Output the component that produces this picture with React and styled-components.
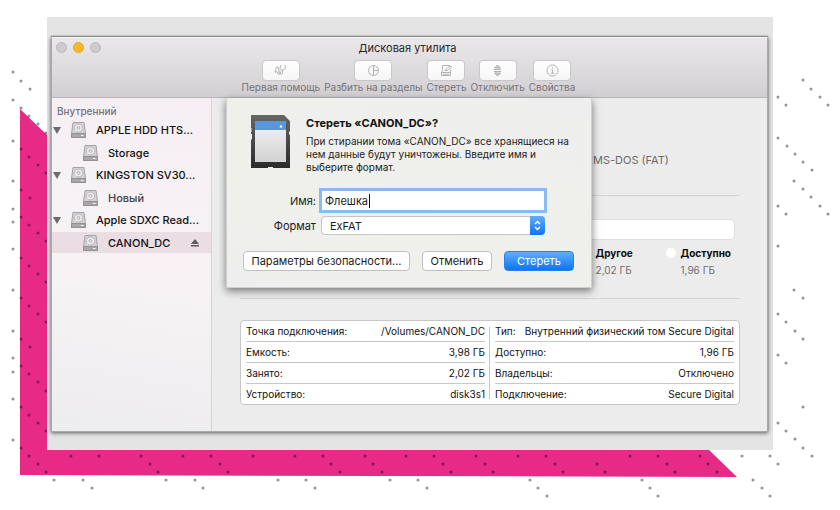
import React from "react";
import styled, { createGlobalStyle } from "styled-components";

const GlobalStyle = createGlobalStyle`
  * { box-sizing: border-box; }
  body { margin: 0; background: #fff; font-family: Inter, "Noto Sans", sans-serif; color: #1c1c1c; }
  button, input, select { font: inherit; color: inherit; margin: 0; }
`;

const Page = styled.div`
  position: relative;
  min-height: 100vh;
  padding: 17px 67px 60px 47px;
  overflow: hidden;
`;

const Artwork = styled.svg`
  position: absolute;
  inset: 0;
`;

const Backdrop = styled.div`
  position: relative;
  padding: 20px 5px 18px 4px;
  background: #e4e4e4;
`;

const Window = styled.div`
  position: relative;
  display: flex;
  flex-direction: column;
  background: #ececec;
  border: 1px solid #a9a9a9;
  border-top-color: #f4f4f4;
  box-shadow: 0 -1px 1px #8b8b8b, 0 1px 4px rgba(0, 0, 0, 0.6);
`;

const Toolbar = styled.header`
  display: flex;
  flex-direction: column;
  align-items: center;
  position: relative;
  height: 60px;
  background: linear-gradient(#eae8eb, #d2cfd3);
  border-bottom: 1px solid #b6b4b7;
`;

const TrafficLights = styled.div`
  position: absolute;
  top: 4px;
  left: 4px;
  display: flex;
  gap: 6px;
`;

const Light = styled.button`
  width: 11px;
  height: 11px;
  padding: 0;
  border-radius: 50%;
  border: 1px solid ${(p) => (p.$active ? "#e2a02a" : "#b9b8ba")};
  background: ${(p) => (p.$active ? "#fdb924" : "#cdcbce")};
`;

const Title = styled.h1`
  margin: 0;
  padding: 2px 4px 0 0;
  font-size: 11px;
  line-height: 16px;
  font-weight: 400;
  color: #262626;
`;

const Tools = styled.nav`
  display: flex;
  gap: 4px;
  padding: 4px 2px 0 0;
`;

const Tool = styled.button`
  display: flex;
  flex-direction: column;
  align-items: center;
  padding: 0;
  border: 0;
  background: none;
  font-size: 10px;
  line-height: 13px;
  color: #757376;
`;

const ToolFace = styled.span`
  display: grid;
  place-items: center;
  width: 38px;
  height: 21px;
  border: 1px solid #c9c7ca;
  border-radius: 4px;
  background: linear-gradient(#fff, #f6f6f6);
`;

const Body = styled.div`
  display: flex;
`;

const Sidebar = styled.aside`
  flex: 0 0 160px;
  border-right: 1px solid #d6d4d6;
  background: linear-gradient(190deg, #f5eff5, #f7f3f4 55%, #edecf0);
`;

const SidebarTitle = styled.h2`
  height: 20px;
  margin: 0;
  padding: 6px 5px 0;
  font-size: 10px;
  line-height: 14px;
  font-weight: 500;
  color: #757277;
`;

const Tree = styled.ul`
  margin: 0;
  padding: 0;
  list-style: none;
`;

const Device = styled.li`
  display: flex;
  align-items: center;
  gap: 10px;
  height: ${(p) => (p.$nested ? 21 : 24)}px;
  padding: 0 12px 0 ${(p) => (p.$nested ? 31 : 1)}px;
  background: ${(p) => (p.$selected ? "#eadde3" : "transparent")};
  font-size: 11px;
  line-height: 16px;
  font-weight: 500;
  white-space: nowrap;
  color: ${(p) => (p.$dim ? "#454346" : "#111")};
`;

const Push = styled.span`
  display: flex;
  margin-left: auto;
`;

const Content = styled.main`
  flex: 1;
  min-width: 0;
  padding: 0 27px 26px 28px;
`;

const VolumeHeader = styled.div`
  height: 98px;
  padding: 54px 0 0 353px;
  border-bottom: 1px solid #d3d3d3;
  font-size: 11px;
  line-height: 16px;
  color: #6a6a6a;
`;

const Usage = styled.section`
  height: 103px;
  padding: 23px 5px 0;
  border-bottom: 1px solid #d3d3d3;
`;

const UsageBar = styled.div`
  height: 21px;
  border: 1px solid #dedede;
  border-radius: 5px;
  background: #fff;
`;

const Legend = styled.div`
  display: flex;
  justify-content: flex-end;
  gap: 18px;
  padding: 5px 4px 0 0;
`;

const LegendItem = styled.div`
  display: flex;
  gap: 5px;
  min-width: 52px;
  font-size: 10px;
  line-height: 17px;
  color: #6c6c6c;
`;

const LegendDot = styled.span`
  width: 10px;
  height: 10px;
  margin-top: 3px;
  border-radius: 50%;
  background: #fff;
`;

const LegendName = styled.strong`
  display: block;
  color: #0d0d0d;
`;

const InfoBox = styled.section`
  display: grid;
  grid-template-columns: repeat(2, minmax(0, 1fr));
  margin-top: 21px;
  border: 1px solid #c6c6c6;
  border-radius: 4px;
  background: #fff;
`;

const InfoColumn = styled.div`
  position: relative;
  padding: 0 5px;
  & + &::before {
    content: "";
    position: absolute;
    left: -1px;
    top: 6px;
    bottom: 5px;
    width: 1px;
    background: #c6c6c6;
  }
`;

const InfoTable = styled.table`
  display: block;
  font-size: 10px;
  line-height: 20px;
  color: #111;
  white-space: nowrap;
  tbody { display: block; }
  tr { display: flex; justify-content: space-between; }
  tr + tr { border-top: 1px solid #c8c8c8; }
  th, td { padding: 0; font-weight: 400; }
`;

const Dialog = styled.form`
  position: absolute;
  top: 60px;
  left: 174px;
  width: 366px;
  padding: 17px 17px 16px 16px;
  border: 1px solid #cfcfcf;
  border-top: 0;
  background: linear-gradient(15deg, #eeeeee, #f0f0eb 40%, #eeeeee);
  box-shadow: 0 3px 8px rgba(0, 0, 0, 0.5);
`;

const Intro = styled.div`
  display: flex;
  gap: 15px;
  padding-left: 7px;
`;

const DialogTitle = styled.h2`
  margin: 0 0 4px;
  font-size: 11px;
  line-height: 16px;
  font-weight: 700;
  color: #111;
`;

const Message = styled.p`
  margin: 0;
  font-size: 10px;
  line-height: 13px;
  white-space: nowrap;
`;

const Fields = styled.div`
  display: grid;
  grid-template-columns: 73px 224px;
  column-gap: 5px;
  row-gap: 5px;
  align-items: center;
  margin-top: 16px;
  font-size: 11px;
  line-height: 16px;
`;

const FieldLabel = styled.label`
  text-align: right;
`;

const Control = styled.div`
  position: relative;
  display: flex;
`;

const NameInput = styled.input`
  width: 100%;
  height: 21px;
  padding: 1px 3px 0;
  border: 1px solid #8fb9e8;
  border-radius: 0;
  background: #fff;
  outline: none;
  box-shadow: 0 0 0 2px #86bcf2;
  caret-color: transparent;
`;

const Caret = styled.span`
  position: absolute;
  left: 48px;
  top: 4px;
  width: 1px;
  height: 14px;
  background: #111;
`;

const FormatSelect = styled.select`
  appearance: none;
  width: 100%;
  height: 19px;
  padding: 0 24px 0 8px;
  border: 1px solid #c4c4c4;
  border-radius: 4px;
  background: #fff;
`;

const Stepper = styled.span`
  position: absolute;
  top: 0;
  right: 0;
  display: grid;
  place-items: center;
  width: 15px;
  height: 19px;
  border-radius: 0 4px 4px 0;
  background: linear-gradient(#5eaef9, #1273f3);
  pointer-events: none;
`;

const Actions = styled.div`
  display: grid;
  grid-template-columns: 167px 70px 70px;
  justify-content: space-between;
  margin-top: 16px;
`;

const Button = styled.button`
  height: 20px;
  padding: 0;
  border: 1px solid ${(p) => (p.$primary ? "#2b80e8" : "#c0c0c0")};
  border-radius: 4px;
  background: ${(p) => (p.$primary ? "linear-gradient(#5eb0fb, #0d74f5)" : "#fff")};
  color: ${(p) => (p.$primary ? "#fff" : "#1c1c1c")};
  font-size: 11px;
  line-height: 16px;
  white-space: nowrap;
`;

const dots = [
  [13, 72], [21, 81], [30, 89], [13, 100], [21, 108], [29, 116], [38, 124], [46, 133], [13, 141], [21, 149], [29, 157], [38, 165], [46, 173],
  [13, 181], [21, 190], [30, 198], [13, 209], [21, 217], [29, 225], [38, 233], [46, 241], [13, 222], [13, 249], [21, 258], [29, 266], [38, 274],
  [46, 282], [13, 290], [21, 298], [29, 306], [38, 314], [46, 322], [13, 331], [21, 339], [30, 347], [13, 358], [13, 372], [21, 366], [29, 374],
  [38, 382], [46, 391], [13, 399], [21, 407], [29, 415], [38, 423], [46, 431], [13, 440], [21, 448], [29, 456], [38, 464], [46, 472],
  [71, 456], [99, 456], [141, 456], [183, 456], [211, 456], [253, 456], [150, 464], [220, 464], [158, 472], [228, 472],
  [54, 480], [83, 480], [92, 488], [166, 480], [195, 480], [203, 488],
  [295, 456], [323, 456], [365, 456], [406, 456], [434, 456], [476, 456], [518, 456], [546, 456], [630, 456], [658, 456], [700, 456], [742, 456], [770, 456],
  [331, 464], [373, 464], [443, 464], [485, 464], [555, 464], [597, 464], [667, 464], [708, 464], [778, 464],
  [340, 472], [382, 472], [451, 472], [493, 472], [563, 472], [605, 472], [675, 472], [717, 472],
  [278, 480], [306, 480], [390, 480], [418, 480], [530, 480], [642, 480], [753, 480],
  [315, 488], [427, 488], [538, 488], [650, 488], [762, 488], [547, 496], [658, 496], [770, 496],
  [803, 80], [811, 89], [820, 97], [828, 105], [778, 97], [786, 105], [778, 138], [787, 146], [795, 154], [803, 162], [812, 170],
  [794, 181], [803, 189], [811, 197], [820, 206], [828, 214], [778, 206], [786, 214], [778, 246], [794, 290], [803, 298],
  [778, 314], [786, 322], [795, 331], [803, 339], [778, 355], [786, 363], [803, 407], [778, 423], [786, 431], [795, 439], [803, 448], [812, 456],
];

function Disk() {
  return (
    <svg width="15" height="16" viewBox="0 0 15 16" aria-hidden="true">
      <path d="M2 .5h11l1.500 11v4H.5v-4z" fill="#d4d2d4" stroke="#a5a3a6" />
      <path d="M.5 11.500h14v4H.5z" fill="#a9a7aa" stroke="#929093" />
      <ellipse cx="7.500" cy="6" rx="4.400" ry="4" fill="#e9e7e9" stroke="#b9b7ba" />
      <circle cx="7.500" cy="6" r="1.400" fill="none" stroke="#a6a4a7" strokeWidth=".8" />
      <path d="M4 9.500l3-3M10 13.500h2.500" stroke="#f5f5f5" />
    </svg>
  );
}

function SdCard() {
  return (
    <svg width="41" height="54" viewBox="0 0 41 54" aria-hidden="true">
      <defs>
        <linearGradient id="shell" x2="0" y2="1"><stop stopColor="#666" /><stop offset="1" stopColor="#2b2b2b" /></linearGradient>
        <linearGradient id="label" x2="0" y2="1"><stop stopColor="#f4f4f4" /><stop offset="1" stopColor="#d2d2d2" /></linearGradient>
      </defs>
      <path d="M1 0h33l6 6v10l-1 1v2l1 1v33H23v-1h-5v1H1V25l1-1v-5H1z" fill="url(#shell)" />
      <path d="M1 13h1v4H1z" fill="#d9a51c" />
      <path d="M5 6h31v41H5z" fill="url(#label)" />
      <path d="M5 6h31v9H5z" fill="#5b95dc" />
      <path d="M29.500 12.500l1.500-3 1.500 3z" fill="#fff" />
    </svg>
  );
}

const toolDrawings = {
  aid: (
    <>
      <path d="M3.500 2.500c-2 2-2 4-2.500 5.500h2.500l.5 2c.8 1 2 .3 1.700-.7L4.800 6 3.500 2.500z" />
      <path d="M6.500 1.500 6 4.500c0 2 4 2 5 0l.5-2.500M8.500 6v2.500c0 2.500-2 2.500-2 .5V7.500M11.500 2l-1-1M6.500 1.500h1" />
    </>
  ),
  partition: <><circle cx="6.500" cy="6.500" r="5" /><path d="M6.500 1.500v10M6.500 6.500h5" /></>,
  erase: <><path d="M10 1.500H2.500v5L1.500 8.500h9V6M5 6.500l1.500-2L10.500 2l1 1L8 6.500z" /><path d="M1.500 8.500v3h9v-3M3 10.200h6" /></>,
  unmount: <><path d="M6.500 1 3.500 4h6zM6.500 12l-3-3h6z" fill="#c8c6c9" /><path d="M3 5.500h7M3 7.500h7" /></>,
  info: <><circle cx="6.500" cy="6.500" r="5.500" /><path d="M5.300 5.800h1.400v3.400M5 9.400h3.200M6.500 3.200v1.200" /></>,
};

const tools = [
  ["aid", "Первая помощь"],
  ["partition", "Разбить на разделы"],
  ["erase", "Стереть"],
  ["unmount", "Отключить"],
  ["info", "Свойства"],
];

const devices = [
  { name: "APPLE HDD HTS..." },
  { name: "Storage", nested: true },
  { name: "KINGSTON SV30..." },
  { name: "Новый", nested: true, dim: true },
  { name: "Apple SDXC Read..." },
  { name: "CANON_DC", nested: true, selected: true },
];

const infoColumns = [
  [["Точка подключения:", "/Volumes/CANON_DC"], ["Емкость:", "3,98 ГБ"], ["Занято:", "2,02 ГБ"], ["Устройство:", "disk3s1"]],
  [["Тип:", "Внутренний физический том Secure Digital"], ["Доступно:", "1,96 ГБ"], ["Владельцы:", "Отключено"], ["Подключение:", "Secure Digital"]],
];

export default function App() {
  return (
    <Page>
      <GlobalStyle />
      <Artwork width="840" height="510" viewBox="0 0 840 510" aria-hidden="true">
        <path d="M20 109 47 135V450H709L737 477 20 475z" fill="#e62a85" />
        {dots.map(([x, y]) => (
          <circle key={`${x}-${y}`} cx={x} cy={y} r="1.5" fill="#000" opacity=".42" />
        ))}
      </Artwork>
      <Backdrop>
        <Window>
          <Toolbar>
            <TrafficLights>
              <Light type="button" aria-label="Закрыть" />
              <Light type="button" aria-label="Свернуть" $active />
              <Light type="button" aria-label="Развернуть" />
            </TrafficLights>
            <Title>Дисковая утилита</Title>
            <Tools>
              {tools.map(([id, label]) => (
                <Tool key={id} type="button">
                  <ToolFace>
                    <svg width="13" height="13" viewBox="0 0 13 13" fill="none" stroke="#b2b0b3" aria-hidden="true">{toolDrawings[id]}</svg>
                  </ToolFace>
                  {label}
                </Tool>
              ))}
            </Tools>
          </Toolbar>
          <Body>
            <Sidebar>
              <SidebarTitle>Внутренний</SidebarTitle>
              <Tree>
                {devices.map((d) => (
                  <Device key={d.name} $nested={d.nested} $selected={d.selected} $dim={d.dim}>
                    {!d.nested && (
                      <svg width="8" height="7" viewBox="0 0 8 7" aria-hidden="true"><path d="M0 0h8L4 7z" fill="#6d6a6f" /></svg>
                    )}
                    <Disk />
                    {d.name}
                    {d.selected && (
                      <Push>
                        <svg width="8" height="8" viewBox="0 0 8 8" fill="#5e5a60" aria-hidden="true"><path d="M4 0l4 5H0zM0 6h8v1.500H0z" /></svg>
                      </Push>
                    )}
                  </Device>
                ))}
              </Tree>
            </Sidebar>
            <Content>
              <VolumeHeader>MS-DOS (FAT)</VolumeHeader>
              <Usage>
                <UsageBar />
                <Legend>
                  <LegendItem><span><LegendName>Другое</LegendName>2,02 ГБ</span></LegendItem>
                  <LegendItem><LegendDot /><span><LegendName>Доступно</LegendName>1,96 ГБ</span></LegendItem>
                </Legend>
              </Usage>
              <InfoBox>
                {infoColumns.map((rows) => (
                  <InfoColumn key={rows[0][0]}>
                    <InfoTable>
                      <tbody>
                        {rows.map(([name, value]) => (
                          <tr key={name}><th scope="row">{name}</th><td>{value}</td></tr>
                        ))}
                      </tbody>
                    </InfoTable>
                  </InfoColumn>
                ))}
              </InfoBox>
            </Content>
          </Body>
          <Dialog onSubmit={(e) => e.preventDefault()}>
            <Intro>
              <SdCard />
              <div>
                <DialogTitle>Стереть «CANON_DC»?</DialogTitle>
                <Message>
                  При стирании тома «CANON_DC» все хранящиеся на<br />
                  нем данные будут уничтожены. Введите имя и<br />
                  выберите формат.
                </Message>
              </div>
            </Intro>
            <Fields>
              <FieldLabel htmlFor="volume-name">Имя:</FieldLabel>
              <Control>
                <NameInput id="volume-name" defaultValue="Флешка" />
                <Caret />
              </Control>
              <FieldLabel htmlFor="volume-format">Формат</FieldLabel>
              <Control>
                <FormatSelect id="volume-format" defaultValue="ExFAT">
                  <option>ExFAT</option>
                </FormatSelect>
                <Stepper>
                  <svg width="7" height="11" viewBox="0 0 7 11" fill="none" stroke="#fff" strokeWidth="1.400" aria-hidden="true"><path d="M1 4l2.500-2.500L6 4M1 7l2.500 2.500L6 7" /></svg>
                </Stepper>
              </Control>
            </Fields>
            <Actions>
              <Button type="button">Параметры безопасности...</Button>
              <Button type="button">Отменить</Button>
              <Button type="submit" $primary>Стереть</Button>
            </Actions>
          </Dialog>
        </Window>
      </Backdrop>
    </Page>
  );
}
